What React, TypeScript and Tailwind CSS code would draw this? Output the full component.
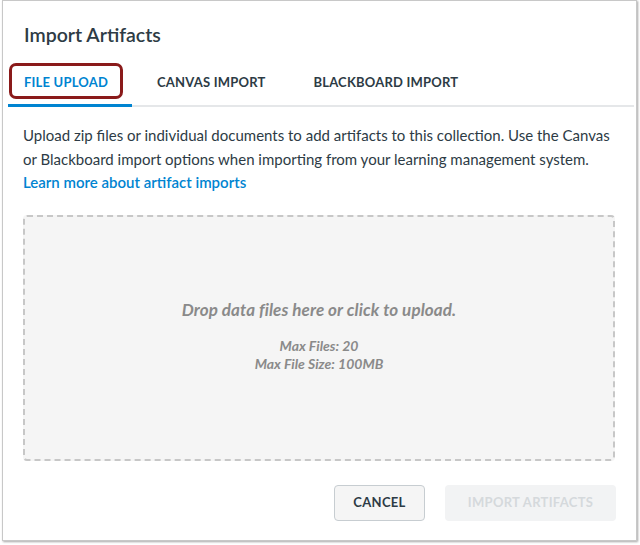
import React from "react";

export default function App() {
  return (
    <div className="w-[640px] h-[545px] bg-white" style={{ fontFamily: "Lato, 'Open Sans', sans-serif" }}>
      <div className="ml-[2px] w-[635px] h-[541px] bg-white border border-[#c8c8c8] shadow-[1px_1px_2px_rgba(0,0,0,0.35)] flex flex-col">
        <h1 className="pl-[21px] pt-[22px] text-[19.5px] leading-[24px] font-semibold text-[#2d3b45]">Import Artifacts</h1>
        <div className="mt-[15px] ml-[5px] mr-[2px] flex items-end border-b-2 border-[#e5e7e9] h-[45px]">
          <div className="relative w-[124px] h-[45px] border-b-[3px] border-[#0084d1] -mb-[2px] flex items-center pl-[16px]">
            <span className="text-[13px] font-bold tracking-[0.2px] text-[#0084d1]">FILE UPLOAD</span>
            <div className="absolute left-[1px] top-[1px] w-[114px] h-[36px] rounded-[7px] border-[3px] border-[#8a1a1a]" />
          </div>
          <div className="h-[45px] flex items-center pl-[25px]">
            <span className="text-[13px] font-bold tracking-[0.2px] text-[#2d3b45]">CANVAS IMPORT</span>
          </div>
          <div className="h-[45px] flex items-center pl-[48px]">
            <span className="text-[13px] font-bold tracking-[0.2px] text-[#2d3b45]">BLACKBOARD IMPORT</span>
          </div>
        </div>
        <p className="mt-[16px] pl-[20px] pr-[24px] text-[15px] leading-[24px] text-[#2d3b45]">
          Upload zip files or individual documents to add artifacts to this collection. Use the Canvas or Blackboard import options when importing from your learning management system.
        </p>
        <a className="pl-[20px] text-[15px] leading-[24px] font-semibold text-[#0084d1] -mt-[1px]">Learn more about artifact imports</a>
        <div className="mt-[21px] ml-[20px] w-[592px] h-[246px] rounded-[4px] border-2 border-dashed border-[#c7c7c7] bg-[#f5f5f5] flex flex-col items-center">
          <div className="mt-[82px] text-[17px] leading-[22px] font-bold italic tracking-[0.1px] text-[#8a8a8a]">Drop data files here or click to upload.</div>
          <div className="mt-[16px] text-[14px] leading-[18px] font-bold italic text-[#8a8a8a]">Max Files: 20</div>
          <div className="text-[14px] leading-[18px] font-bold italic text-[#8a8a8a]">Max File Size: 100MB</div>
        </div>
        <div className="mt-[24px] flex justify-end gap-[20px] pr-[20px]">
          <button className="w-[91px] h-[36px] rounded-[4px] border border-[#c7cdd1] bg-[#f5f5f5] text-[13px] font-bold tracking-[0.3px] text-[#2d3b45]">CANCEL</button>
          <button className="w-[171px] h-[36px] rounded-[4px] bg-[#f2f3f4] text-[13px] font-bold tracking-[0.3px] text-[#d5d9dc]">IMPORT ARTIFACTS</button>
        </div>
      </div>
    </div>
  );
}
